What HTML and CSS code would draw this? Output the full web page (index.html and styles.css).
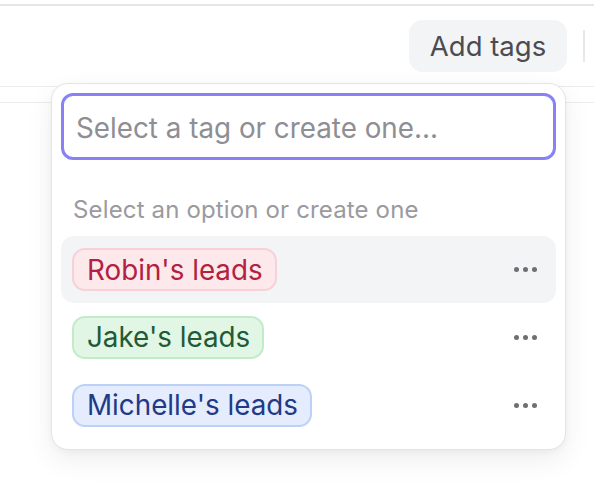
FILE: index.html
```html
<!DOCTYPE html>
<html>
<head>
<meta charset="utf-8">
<link rel="stylesheet" href="styles.css">
</head>
<body>
<div class="page">
  <div class="topline"></div>
  <div class="toolbar">
    <button class="add-btn">Add tags</button>
    <div class="divider"></div>
  </div>
  <div class="table-head"></div>
  <div class="popover">
    <div class="search">Select a tag or create one...</div>
    <div class="hint">Select an option or create one</div>
    <div class="option active">
      <span class="chip red">Robin's leads</span>
      <span class="more"><i></i><i></i><i></i></span>
    </div>
    <div class="option">
      <span class="chip green">Jake's leads</span>
      <span class="more"><i></i><i></i><i></i></span>
    </div>
    <div class="option">
      <span class="chip blue">Michelle's leads</span>
      <span class="more"><i></i><i></i><i></i></span>
    </div>
  </div>
</div>
</body>
</html>
```

FILE: styles.css
```css
* { box-sizing: border-box; }
html, body { margin: 0; padding: 0; background: #fff; }
body { font-family: Inter, "Noto Sans", sans-serif; width: 594px; height: 500px; overflow: hidden; }
.page { position: relative; height: 500px; padding-top: 4px; }
.topline { height: 2px; background: #e5e6e8; }
.toolbar {
  display: flex; justify-content: flex-end; align-items: center;
  padding-top: 14px; height: 66px;
}
.add-btn {
  font-family: inherit; font-size: 27.5px; color: #4b4b52;
  background: #f3f4f6; border: none; border-radius: 14px;
  width: 158px; height: 52px; padding: 0; margin-right: 16px;
}
.divider { width: 2px; height: 32px; background: #e8e8ea; margin-right: 9px; }
.table-head {
  margin-top: 14px; height: 17px;
  border-top: 1px solid #ececee; border-bottom: 1px solid #ececee;
}
.popover {
  position: absolute; left: 51px; top: 83px; width: 515px; height: 367px;
  background: #fff; border: 1px solid #e4e4e7; border-radius: 17px;
  box-shadow: 0 10px 28px rgba(0,0,0,0.07), 0 2px 6px rgba(0,0,0,0.04);
  padding: 9px 9px 10px 9px;
}
.search {
  height: 67px; border: 3px solid #8982f6; border-radius: 12px;
  padding: 2px 12px 0; display: flex; align-items: center;
  font-size: 27.8px; color: #8e8e93;
}
.hint {
  font-size: 24px; color: #9a9aa0; padding: 35px 0 0 12px; height: 76px;
  letter-spacing: 0.15px;
}
.option {
  height: 68px; display: flex; align-items: center; justify-content: space-between;
  padding: 0 19px 0 11px; border-radius: 13px;
}
.option.active { background: #f3f4f6; height: 67px; }
.chip {
  font-size: 27.8px; height: 43px; display: inline-flex; align-items: center;
  padding: 0 12px 0 13px; border-radius: 13px; border: 2px solid;
}
.chip.red { background: #fde8ec; border-color: #f8d0d8; color: #b0223f; }
.chip.green { background: #e1f6e5; border-color: #c2ebc9; color: #225a35; }
.chip.blue { background: #e4ecfd; border-color: #bcd0f8; color: #1f3a86; }
.more { display: flex; gap: 4px; }
.more i { width: 5px; height: 5px; border-radius: 50%; background: #6e6e73; display: block; }
```
